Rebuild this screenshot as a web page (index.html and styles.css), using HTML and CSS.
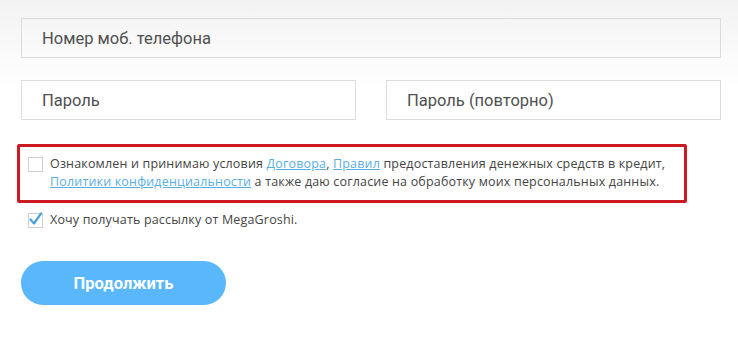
FILE: index.html
```html
<!DOCTYPE html>
<html lang="ru">
<head>
<meta charset="utf-8">
<title>Регистрация</title>
<link rel="stylesheet" href="styles.css">
</head>
<body>
<div class="page">
  <form class="form">
    <div class="field field-full"><span class="placeholder">Номер моб. телефона</span></div>
    <div class="row">
      <div class="field"><span class="placeholder">Пароль</span></div>
      <div class="field"><span class="placeholder">Пароль (повторно)</span></div>
    </div>
    <div class="highlight">
      <div class="check-row">
        <span class="box"></span>
        <p class="check-text">Ознакомлен и принимаю условия <a href="#">Договора</a>, <a href="#">Правил</a> предоставления денежных средств в кредит, <a href="#">Политики конфиденциальности</a> а также даю согласие на обработку моих персональных данных.</p>
      </div>
    </div>
    <div class="check-row check-second">
      <span class="box checked"><svg width="15" height="15" viewBox="0 0 15 15"><path d="M2.5 7.5 L6 11.5 L13 1.5" fill="none" stroke="#4aa3df" stroke-width="2.2" stroke-linecap="round" stroke-linejoin="round"/></svg></span>
      <p class="check-text">Хочу получать рассылку от MegaGroshi.</p>
    </div>
    <button type="button" class="submit">Продолжить</button>
  </form>
</div>
</body>
</html>
```
FILE: styles.css
```css
html, body {
  margin: 0;
  padding: 0;
}
body {
  width: 738px;
  height: 363px;
  overflow: hidden;
  background: linear-gradient(to bottom, #f2f2f2 0px, #fafafa 50px, #ffffff 90px);
  font-family: "Open Sans", "Noto Sans", sans-serif;
  color: #444;
}
.page {
  padding: 18px 0 0 21px;
}
.form {
  width: 700px;
  display: flex;
  flex-direction: column;
}
.field {
  box-sizing: border-box;
  height: 40px;
  border: 1px solid #dcdcdc;
  display: flex;
  align-items: center;
  padding-left: 20px;
  background: transparent;
  width: 335px;
}
.field-full {
  width: 700px;
}
.placeholder {
  font-family: "Roboto", "Liberation Sans", sans-serif;
  font-size: 16.5px;
  color: #505050;
}
.row {
  margin-top: 22px;
  display: flex;
  gap: 30px;
}
.highlight {
  margin-top: 24px;
  margin-left: -4px;
  width: 670px;
  box-sizing: border-box;
  border: 3px solid #cc1a22;
  border-radius: 2px;
  padding: 8px 0 9px 8px;
}
.check-row {
  display: flex;
  align-items: flex-start;
  gap: 7px;
}
.box {
  flex: none;
  box-sizing: border-box;
  width: 15px;
  height: 15px;
  border: 1px solid #cfcfcf;
  background: #fff;
  margin-top: 2px;
  position: relative;
}
.box svg {
  position: absolute;
  left: -1px;
  top: -2px;
}
.check-text {
  margin: 0;
  font-size: 12.5px;
  line-height: 18px;
  letter-spacing: 0.17px;
  color: #444;
}
.check-text a {
  color: #5aaee3;
  text-decoration: underline;
}
.check-second {
  margin-top: 8px;
  padding-left: 7px;
}
.submit {
  margin-top: 32px;
  width: 205px;
  height: 44px;
  border: none;
  border-radius: 22px;
  background: #5ab7fc;
  color: #fff;
  font-family: "Roboto", "Liberation Sans", sans-serif;
  font-weight: bold;
  font-size: 16.5px;
  cursor: pointer;
  padding: 0;
}
```
